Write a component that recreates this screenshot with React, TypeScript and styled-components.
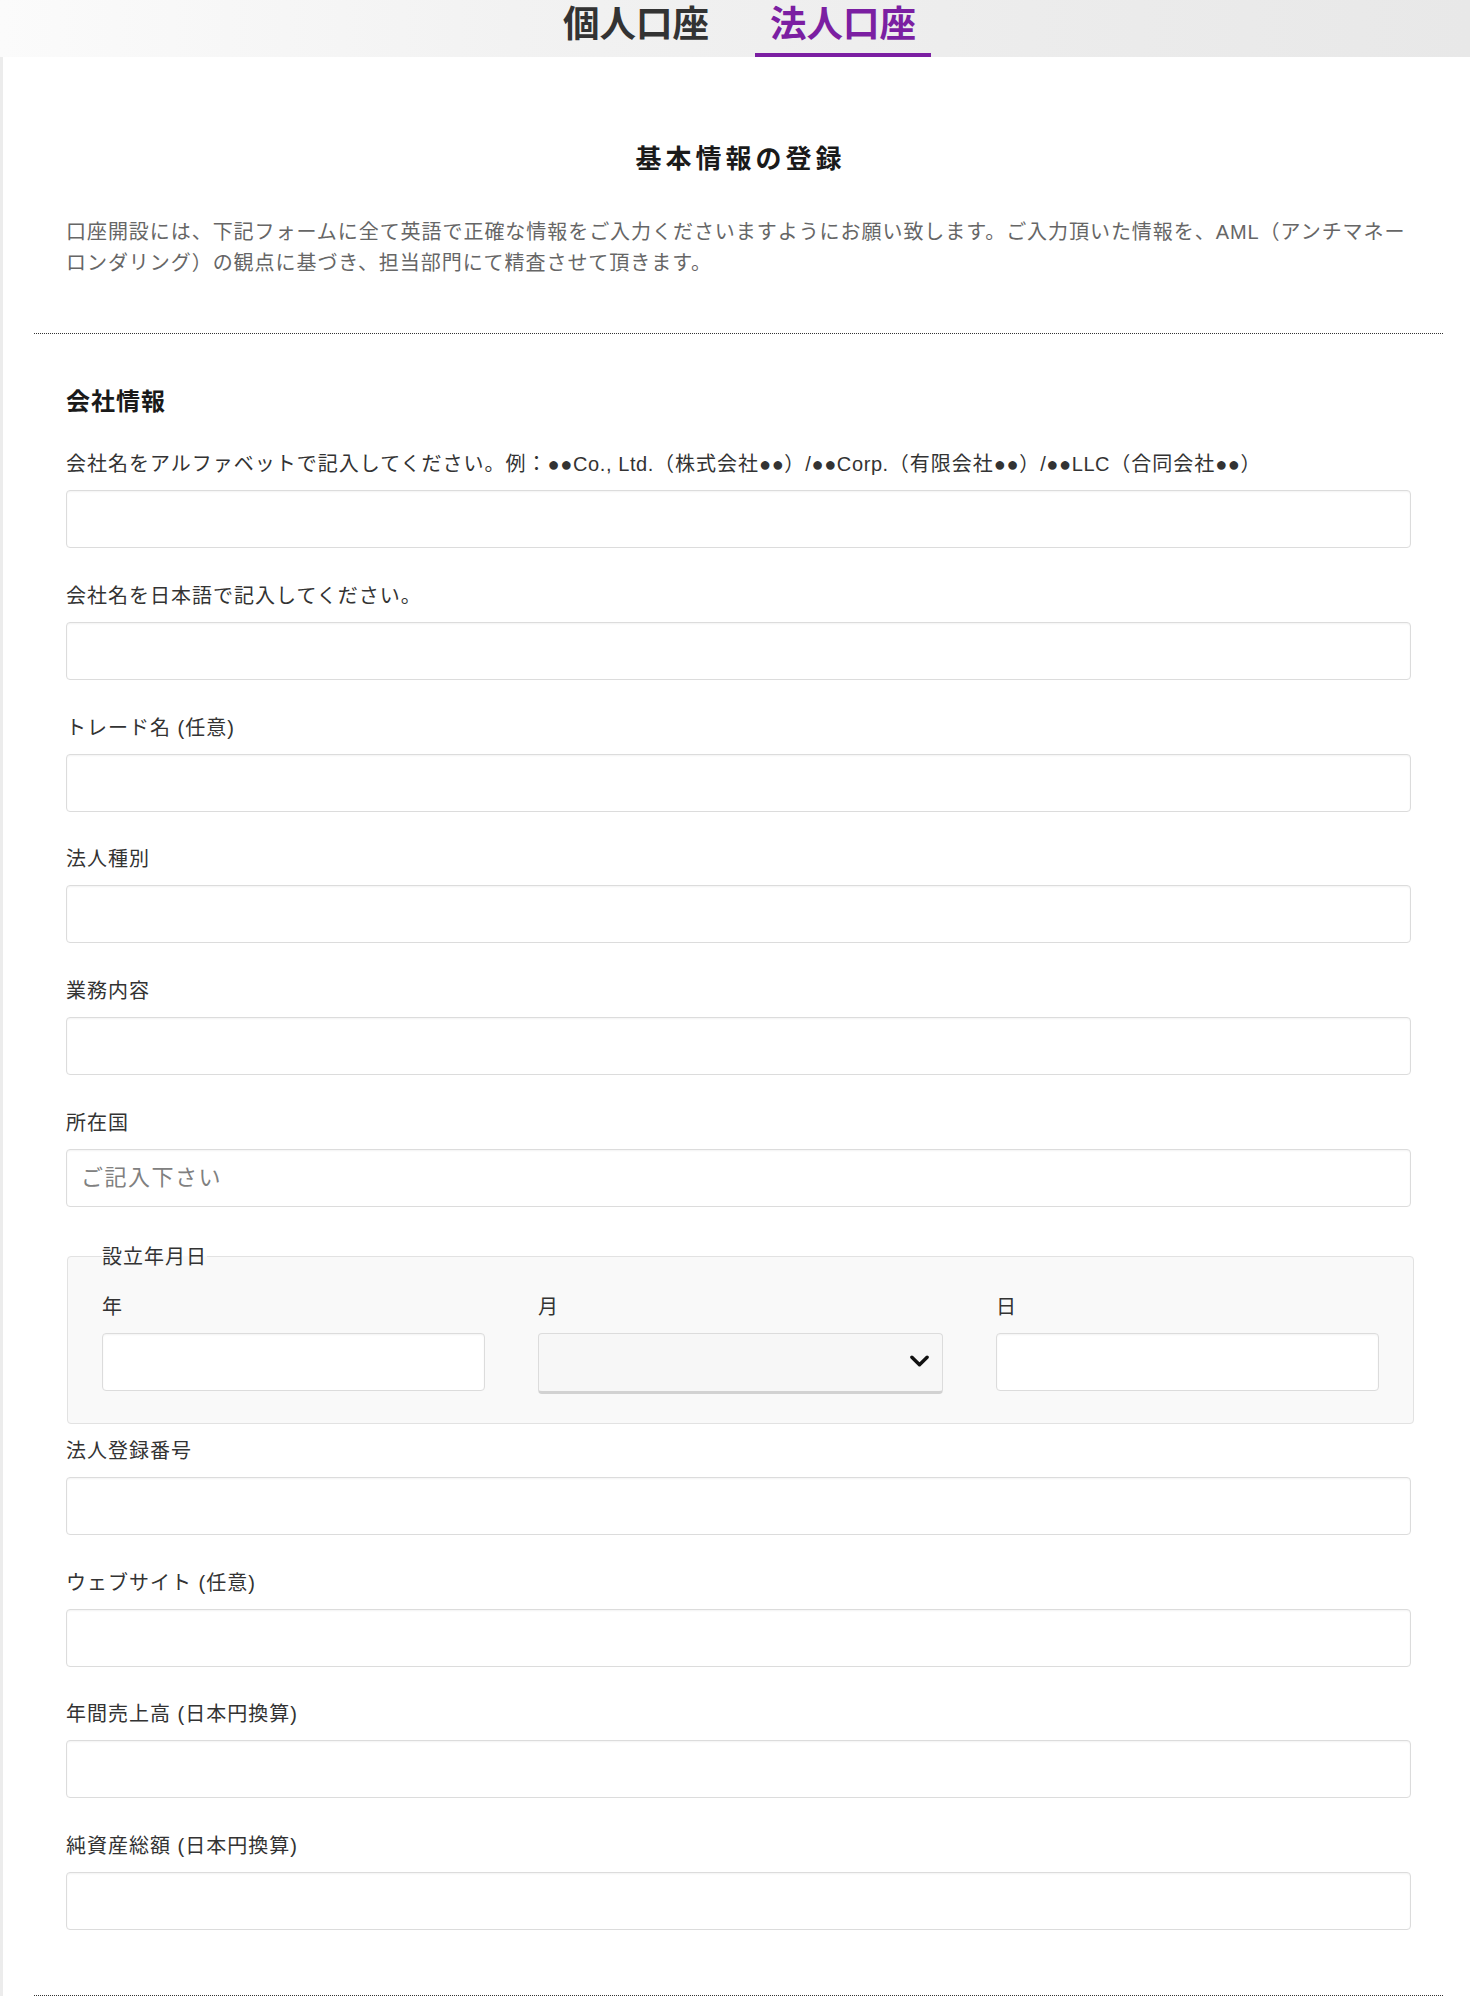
import type { ReactNode } from 'react';
import styled, { createGlobalStyle } from 'styled-components';

const GlobalStyle = createGlobalStyle`
  * {
    box-sizing: border-box;
  }

  body {
    margin: 0;
    background: #fff;
    color: #333;
    font-family: "Liberation Sans", "Noto Sans CJK JP", sans-serif;
  }
`;

const fields = [
  'トレード名 (任意)',
  '法人種別',
  '業務内容',
];

const laterFields = [
  'ウェブサイト (任意)',
  '年間売上高 (日本円換算)',
  '純資産総額 (日本円換算)',
];

function TextField({ label, placeholder }: { label: ReactNode; placeholder?: string }) {
  return (
    <Field>
      <Label>{label}</Label>
      <TextInput type="text" placeholder={placeholder} />
    </Field>
  );
}

function AlphaLabel() {
  return (
    <>
      会社名をアルファベットで記入してください。例：<Latin>●●Co., Ltd.</Latin>（株式会社
      <Latin>●●</Latin>）<Latin>/●●Corp.</Latin>（有限会社<Latin>●●</Latin>）<Latin>/●●LLC</Latin>
      （合同会社<Latin>●●</Latin>）
    </>
  );
}

function App() {
  return (
    <>
      <GlobalStyle />
      <Header>
        <TabRow>
          <Tab>個人口座</Tab>
          <Tab $active>法人口座</Tab>
        </TabRow>
      </Header>

      <Main>
        <Intro>
          <Title>基本情報の登録</Title>
          <Lead>
            口座開設には、下記フォームに全て英語で正確な情報をご入力くださいますようにお願い致します。ご入力頂いた情報を、AML（アンチマネーロンダリング）の観点に基づき、担当部門にて精査させて頂きます。
          </Lead>
        </Intro>

        <Section>
          <SectionTitle>会社情報</SectionTitle>

          <TextField label={<AlphaLabel />} />
          <TextField label="会社名を日本語で記入してください。" />
          {fields.map((f) => (
            <TextField key={f} label={f} />
          ))}
          <TextField label="所在国" placeholder="ご記入下さい" />

          <DateSet>
            <Legend>設立年月日</Legend>
            <DateGrid>
              <div>
                <Label>年</Label>
                <TextInput type="text" />
              </div>
              <div>
                <Label>月</Label>
                <SelectWrap>
                  <Select defaultValue="">
                    <option value=""></option>
                    {Array.from({ length: 12 }, (_, i) => (
                      <option key={i} value={i + 1}>
                        {i + 1}
                      </option>
                    ))}
                  </Select>
                  <Chevron viewBox="0 0 20 12">
                    <polyline points="2,2 10,10 18,2" />
                  </Chevron>
                </SelectWrap>
              </div>
              <div>
                <Label>日</Label>
                <TextInput type="text" />
              </div>
            </DateGrid>
          </DateSet>

          <TextField label="法人登録番号" />
          {laterFields.map((f) => (
            <TextField key={f} label={f} />
          ))}
        </Section>
      </Main>
    </>
  );
}

const Header = styled.header`
  height: 57px;
  padding-left: 9px;
  background: linear-gradient(90deg, #fbfbfb 0%, #f2f2f2 35%, #ececec 70%, #e8e8e8 100%);
  display: flex;
  justify-content: center;
`;

const TabRow = styled.nav`
  display: flex;
  gap: 31px;
`;

const Tab = styled.a<{ $active?: boolean }>`
  height: 57px;
  padding: 0 15px;
  line-height: 43px;
  font-size: 36.5px;
  font-weight: 700;
  font-family: "Noto Sans CJK JP", sans-serif;
  color: ${(p) => (p.$active ? '#7b1fa2' : '#333')};
  border-bottom: 4px solid ${(p) => (p.$active ? '#7b1fa2' : 'transparent')};
  cursor: pointer;
`;

const Main = styled.main`
  border-left: 3px solid #ececec;
  padding: 0 27px 0 31px;
`;

const Intro = styled.div`
  padding: 83px 32px 54px;
  border-bottom: 1px dotted #333;
`;

const Title = styled.h1`
  margin: 0;
  text-align: center;
  font-size: 26px;
  line-height: 38px;
  font-weight: 700;
  letter-spacing: 4px;
  padding-left: 4px;
  color: #1a1a1a;
`;

const Lead = styled.p`
  margin: 39px 0 0;
  font-size: 20px;
  line-height: 31px;
  letter-spacing: 0.95px;
  color: #666;
`;

const Section = styled.section`
  padding: 51px 32px 32px;
  border-bottom: 1px dotted #333;
`;

const SectionTitle = styled.h2`
  margin: 0 0 30px;
  font-size: 24px;
  line-height: 34px;
  font-weight: 700;
  letter-spacing: 1px;
  color: #1a1a1a;
`;

const Field = styled.div`
  margin-bottom: 32.8px;
`;

const Label = styled.label`
  display: block;
  margin-bottom: 11px;
  font-size: 20px;
  line-height: 30px;
  letter-spacing: 1px;
  color: #333;
`;

const Latin = styled.span`
  letter-spacing: 0.6px;
`;

const TextInput = styled.input`
  display: block;
  width: 100%;
  height: 58px;
  padding: 0 14px;
  border: 1px solid #dcdcdc;
  border-radius: 4px;
  background: #fff;
  box-shadow: inset 0 1px 2px rgba(0, 0, 0, 0.05);
  font-family: inherit;
  font-size: 22px;
  letter-spacing: 1.5px;
  color: #333;
  outline: none;

  &::placeholder {
    color: #808080;
  }
`;

const DateSet = styled.fieldset`
  margin: 0 -3px 12px 1px;
  padding: 18px 34px 29px;
  border: 1px solid #e2e2e2;
  border-radius: 4px;
  background: #f9f9f9;
`;

const Legend = styled.legend`
  padding: 0;
  font-size: 20px;
  line-height: 34px;
  letter-spacing: 1px;
  color: #333;
`;

const DateGrid = styled.div`
  display: grid;
  grid-template-columns: 383fr 405fr 383fr;
  column-gap: 53px;
`;

const SelectWrap = styled.div`
  position: relative;
`;

const Select = styled.select`
  display: block;
  width: 100%;
  height: 61px;
  padding: 0 14px;
  appearance: none;
  border: 1px solid #dcdcdc;
  border-bottom: 3px solid #d2d2d2;
  border-radius: 4px;
  background: #f7f7f7;
  font-family: inherit;
  font-size: 20px;
  color: #333;
  outline: none;
`;

const Chevron = styled.svg`
  position: absolute;
  right: 14px;
  top: 22px;
  width: 19px;
  height: 12px;
  fill: none;
  stroke: #111;
  stroke-width: 3.6;
  stroke-linecap: round;
  stroke-linejoin: round;
  pointer-events: none;
`;

export default App;
